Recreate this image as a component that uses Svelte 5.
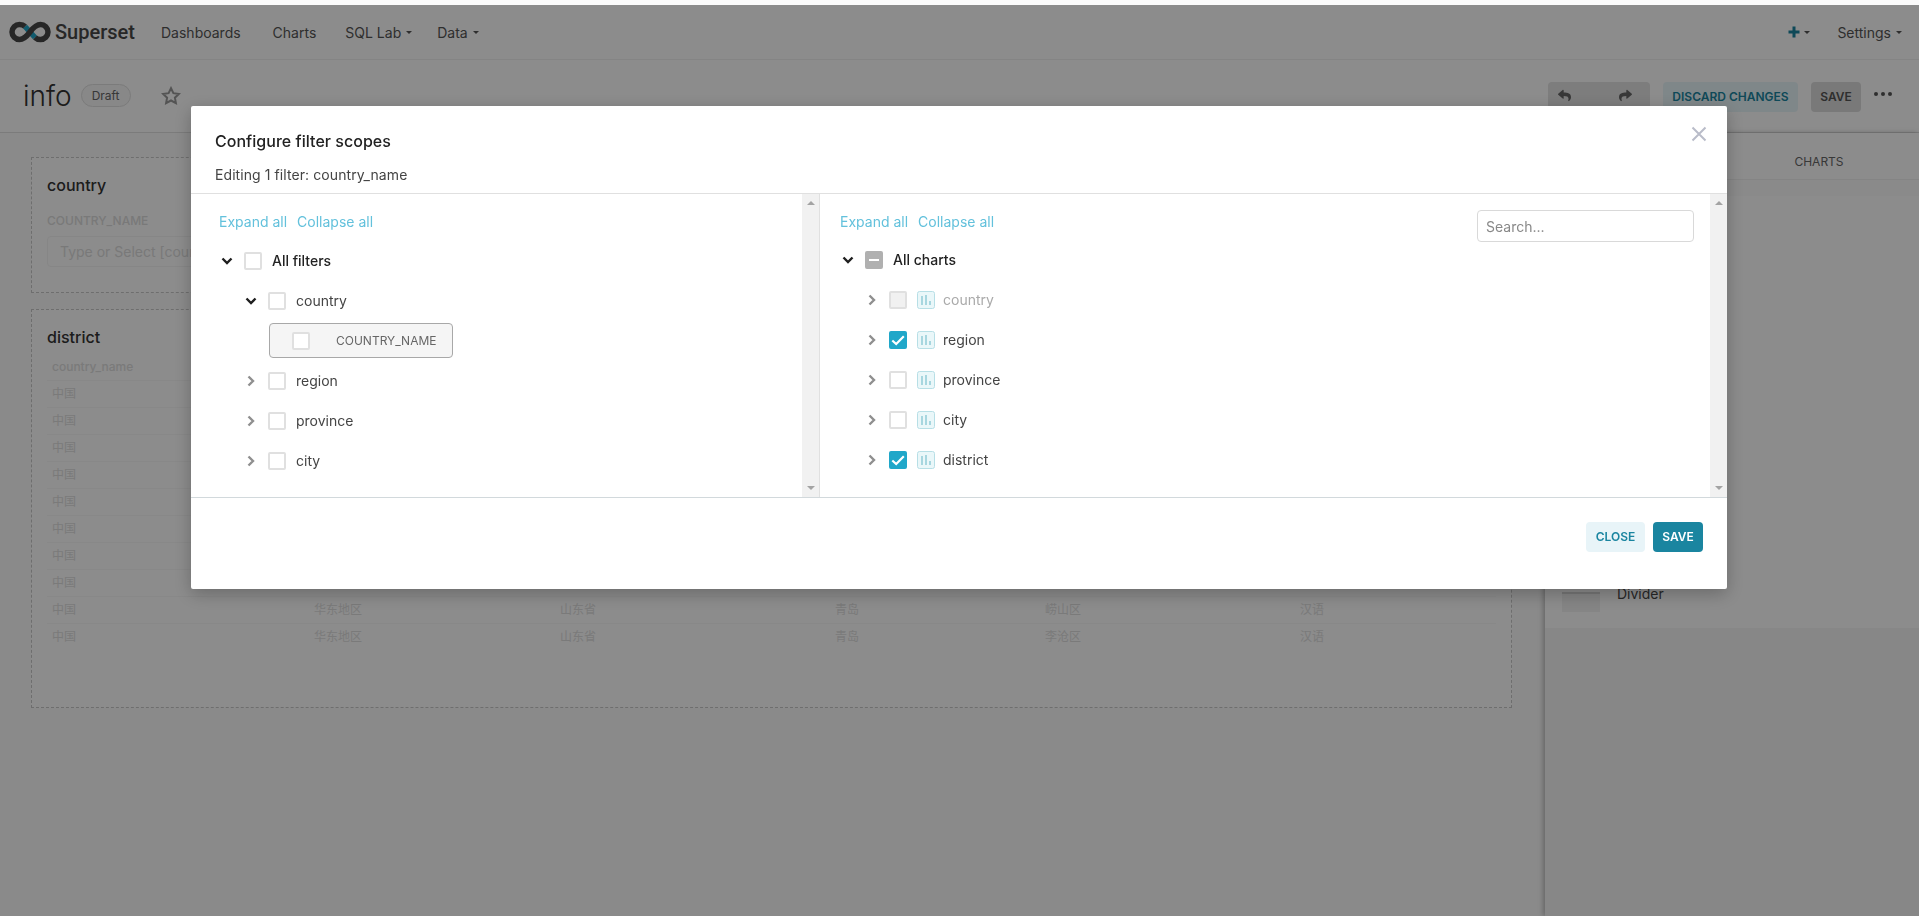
<script>
  const rows = ['市南区', '市北区', '黄岛区', '城阳区', '即墨区', '胶州市', '平度市', '莱西市', '崂山区', '李沧区']
  const columns = ['country_name', 'region_name', 'province_name', 'city_name', 'district_name', 'language']
  const elements = ['Header', 'Text', 'Row', 'Column', 'Tabs', 'Divider']

  const filterRows = ['region', 'province', 'city']
  const chartRows = [
    { name: 'country', state: 'disabled' },
    { name: 'region', state: 'checked' },
    { name: 'province', state: '' },
    { name: 'city', state: '' },
    { name: 'district', state: 'checked' }
  ]
</script>

{#snippet chevron(open)}
  <span class="chev">
    {#if open}
      <svg width="12" height="8" viewBox="0 0 12 8"><path d="M1.500 1.500 6 6l4.500-4.500" class="chev-open" /></svg>
    {:else}
      <svg width="8" height="12" viewBox="0 0 8 12"><path d="M1.500 1.500 6 6l-4.500 4.500" class="chev-closed" /></svg>
    {/if}
  </span>
{/snippet}

{#snippet checkbox(state)}
  <span class="cb {state}">
    {#if state === 'checked'}
      <svg width="14" height="14" viewBox="0 0 14 14"><path d="M1.300 7.500 5.200 11 12.800 3.300" class="tick" /></svg>
    {:else if state === 'half'}
      <span class="dash"></span>
    {/if}
  </span>
{/snippet}

<div class="page">
  <nav class="nav">
    <div class="brand">
      <svg width="42" height="22" viewBox="0 0 42 22" class="logo">
        <path d="M16 5.500 26 16.500" class="logo-teal" />
        <path d="M16 5.500C14.500 4 12.500 3.500 10.500 3.500a7.500 7.500 0 0 0 0 15C15 18.500 18 15 21 11c3-4 6-7.500 10.500-7.500a7.500 7.500 0 0 1 0 15c-2 0-4-.5-5.500-2" class="logo-dark" />
      </svg>
      <span class="brand-name">Superset</span>
    </div>
    <a class="nav-link dash-link">Dashboards</a>
    <a class="nav-link charts-link">Charts</a>
    <a class="nav-link sql-link">SQL Lab<i class="caret"></i></a>
    <a class="nav-link">Data<i class="caret"></i></a>
    <div class="nav-right">
      <span class="plus"><svg width="12" height="12" viewBox="0 0 12 12"><path d="M6 .5v11M.5 6h11" /></svg><i class="caret"></i></span>
      <a class="nav-link">Settings<i class="caret"></i></a>
    </div>
  </nav>

  <header class="head">
    <h1>info</h1>
    <span class="pill">Draft</span>
    <svg class="star" width="20" height="20" viewBox="0 0 20 20"><path d="M10 2.200l2.400 5 5.500.7-4 3.800 1 5.400-4.900-2.600-4.900 2.600 1-5.400-4-3.800 5.500-.7z" /></svg>
    <div class="head-actions">
      <div class="undo">
        <svg width="13" height="13" viewBox="0 0 512 512"><path d="M8.309 189.836L184.313 37.851C199.719 24.546 224 35.347 224 56.015v80.053c160.629 1.839 288 34.032 288 186.258 0 61.441-39.581 122.309-83.333 154.132-13.653 9.931-33.111-2.533-28.077-18.631 45.344-145.012-21.507-183.51-176.59-185.742V360c0 20.7-24.3 31.453-39.687 18.164l-176.004-152c-11.071-9.562-11.086-26.753 0-36.328z" /></svg>
        <svg width="13" height="13" viewBox="0 0 512 512" class="flip"><path d="M8.309 189.836L184.313 37.851C199.719 24.546 224 35.347 224 56.015v80.053c160.629 1.839 288 34.032 288 186.258 0 61.441-39.581 122.309-83.333 154.132-13.653 9.931-33.111-2.533-28.077-18.631 45.344-145.012-21.507-183.51-176.59-185.742V360c0 20.7-24.3 31.453-39.687 18.164l-176.004-152c-11.071-9.562-11.086-26.753 0-36.328z" /></svg>
      </div>
      <button class="btn discard">DISCARD CHANGES</button>
      <button class="btn save-head">SAVE</button>
      <span class="dots"><i></i><i></i><i></i></span>
    </div>
  </header>

  <div class="content">
    <main class="grid">
      <section class="card filter-card">
        <h2>country</h2>
        <div class="label">COUNTRY_NAME</div>
        <div class="fake-input">Type or Select [country_name]</div>
      </section>
      <section class="card table-card">
        <h2>district</h2>
        <div class="tr th">
          {#each columns as c}<span>{c}</span>{/each}
        </div>
        {#each rows as d}
          <div class="tr">
            <span>中国</span><span>华东地区</span><span>山东省</span><span>青岛</span><span>{d}</span><span>汉语</span>
          </div>
        {/each}
      </section>
    </main>
    <aside class="side">
      <div class="tabs"><span>LAYOUT ELEMENTS</span><span>CHARTS</span></div>
      <div class="tab-strip"></div>
      <div class="elements">
        {#each elements as el}
          <div class="element"><span class="thumb"></span><span class="el-name">{el}</span></div>
        {/each}
      </div>
    </aside>
  </div>
</div>

<div class="backdrop"></div>

<div class="modal-layer">
  <div class="modal">
    <button class="close" aria-label="Close">
      <svg width="16" height="16" viewBox="0 0 16 16"><path d="M1.500 1.500l13 13M14.500 1.500l-13 13" /></svg>
    </button>
    <div class="modal-head">
      <div class="modal-title">Configure filter scopes</div>
      <div class="modal-sub">Editing 1 filter: country_name</div>
    </div>
    <div class="modal-body">
      <div class="pane left">
        <div class="tree">
          <div class="toolbar"><a>Expand all</a><a>Collapse all</a></div>
          <div class="list">
            <div class="row">{@render chevron(true)}{@render checkbox('')}<span class="txt strong">All filters</span></div>
            <div class="row lvl2">{@render chevron(true)}{@render checkbox('')}<span class="txt">country</span></div>
            <div class="leaf">{@render checkbox('')}<span class="leaf-name">COUNTRY_NAME</span></div>
            {#each filterRows as f}
              <div class="row lvl2">{@render chevron(false)}{@render checkbox('')}<span class="txt">{f}</span></div>
            {/each}
          </div>
        </div>
        <div class="scrollbar"><i class="up"></i><i class="down"></i></div>
      </div>
      <div class="pane right">
        <div class="tree">
          <div class="toolbar">
            <a>Expand all</a><a>Collapse all</a>
            <input class="search" placeholder="Search..." />
          </div>
          <div class="list charts">
            <div class="row">{@render chevron(true)}{@render checkbox('half')}<span class="txt strong">All charts</span></div>
            {#each chartRows as c}
              <div class="row lvl2" class:off={c.state === 'disabled'}>
                {@render chevron(false)}{@render checkbox(c.state)}
                <svg class="chart-ico" width="18" height="18" viewBox="0 0 18 18">
                  <rect x=".5" y=".5" width="17" height="17" rx="2" class="ico-box" />
                  <path d="M4 5h2v9H4zM8 4h2v10H8zM12 10h2v4h-2z" class="ico-bars" />
                </svg>
                <span class="txt ico-txt">{c.name}</span>
              </div>
            {/each}
          </div>
        </div>
        <div class="scrollbar"><i class="up"></i><i class="down"></i></div>
      </div>
    </div>
    <div class="modal-foot">
      <button class="btn close-btn">CLOSE</button>
      <button class="btn save-btn">SAVE</button>
    </div>
  </div>
</div>

<style>
  :global(body) {
    margin: 0;
    overflow: hidden;
    background: #fff;
  }
  .page {
    height: 911px;
    padding-top: 5px;
    overflow: hidden;
    display: flex;
    flex-direction: column;
    font-family: Inter, "Noto Sans CJK SC", sans-serif;
    font-size: 14px;
    color: #555;
    background: #fbfbfb;
  }
  a { cursor: pointer; }

  .nav {
    height: 55px;
    flex: none;
    box-sizing: border-box;
    border-bottom: 1px solid #f0f0f0;
    background: #fff;
    display: flex;
    align-items: center;
  }
  .brand {
    width: 161px;
    display: flex;
    align-items: center;
    padding-left: 9px;
    box-sizing: border-box;
  }
  .logo { fill: none; stroke-width: 5.5; }
  .logo-teal { stroke: #20a7c9; }
  .logo-dark { stroke: #484848; }
  .brand-name {
    margin-left: 4px;
    font-family: Roboto, sans-serif;
    font-size: 20px;
    font-weight: 500;
    color: #484848;
  }
  .nav-link { color: #555; display: inline-flex; align-items: center; }
  .dash-link { margin-right: 32px; }
  .charts-link { margin-right: 29px; }
  .sql-link { margin-right: 25px; }
  .caret {
    display: inline-block;
    margin-left: 5px;
    border-left: 3px solid transparent;
    border-right: 3px solid transparent;
    border-top: 3.500px solid #555;
  }
  .nav-right {
    margin-left: auto;
    padding-right: 17px;
    display: flex;
    align-items: center;
    gap: 27px;
  }
  .plus { display: inline-flex; align-items: center; }
  .plus svg { stroke: #1a85a0; stroke-width: 3; }
  .plus .caret { margin-left: 4px; }

  .head {
    height: 73px;
    flex: none;
    box-sizing: border-box;
    border-bottom: 1px solid #e0e0e0;
    background: #fff;
    display: flex;
    align-items: center;
    padding: 0 0 1px 23px;
    position: relative;
  }
  h1 {
    margin: 0 9px 0 0;
    font-size: 28px;
    font-weight: 300;
    color: #333;
    line-height: 1;
  }
  .pill {
    width: 50px;
    height: 23px;
    box-sizing: border-box;
    border: 1px solid #e0e0e0;
    border-radius: 12px;
    background: #f7f7f7;
    font-size: 12px;
    line-height: 21px;
    text-align: center;
    color: #666;
  }
  .star {
    margin-left: 30px;
    fill: none;
    stroke: #9a9a9a;
    stroke-width: 2;
  }
  .head-actions {
    position: absolute;
    top: 22px;
    left: 1548px;
    display: flex;
    align-items: flex-start;
  }
  .undo {
    width: 102px;
    height: 35px;
    box-sizing: border-box;
    padding: 7px 18px 0 10px;
    border-radius: 4px;
    background: #e3e3e3;
    display: flex;
    justify-content: space-between;
    fill: #666;
  }
  .flip { transform: scaleX(-1); }
  .btn {
    border: 0;
    border-radius: 4px;
    height: 30px;
    font-family: Inter, sans-serif;
    font-size: 12px;
    font-weight: 600;
    padding: 0 0 1px;
  }
  .discard {
    width: 135px;
    margin-left: 13px;
    background: #e8f6fa;
    color: #1a85a0;
  }
  .save-head {
    width: 50px;
    margin-left: 13px;
    background: #dcdcdc;
    color: #555;
  }
  .dots {
    display: flex;
    gap: 3px;
    margin: 10px 0 0 13px;
  }
  .dots i {
    width: 4px;
    height: 4px;
    border-radius: 50%;
    background: #555;
  }

  .content { flex: 1; display: flex; min-height: 0; }
  .grid {
    width: 1545px;
    flex: none;
    box-sizing: border-box;
    padding: 24px 33px 0 31px;
    display: flex;
    flex-direction: column;
    gap: 16px;
    background: #fbfbfb;
  }
  .card {
    border: 1px dashed #c8c8c8;
    box-sizing: border-box;
    padding: 0 15px;
    background: #fff;
  }
  h2 {
    margin: 0;
    font-size: 16px;
    font-weight: 500;
    color: #333;
    line-height: 20px;
  }
  .filter-card { height: 136px; padding-top: 17px; }
  .label {
    margin-top: 18px;
    font-size: 12px;
    font-weight: 500;
    color: #dcdcdc;
    line-height: 16px;
  }
  .fake-input {
    margin-top: 7px;
    height: 31px;
    box-sizing: border-box;
    border: 1px solid #f4f4f4;
    border-radius: 4px;
    padding-left: 12px;
    line-height: 29px;
    color: #dcdcdc;
  }
  .table-card { height: 399px; padding-top: 17px; }
  .tr {
    display: grid;
    grid-template-columns: 262px 246px 275px 210px 255px 1fr;
    height: 27px;
    box-sizing: border-box;
    border-bottom: 1px solid #f8f8f8;
    font-size: 12px;
    line-height: 26px;
    color: #dedede;
  }
  .tr:last-child { border-bottom: 0; }
  .tr span { padding-left: 5px; }
  .th { margin-top: 7px; font-weight: 500; }

  .side {
    flex: 1;
    background: #f6f6f6;
    box-shadow: -2px 0 5px rgba(0, 0, 0, 0.25);
    position: relative;
  }
  .tabs {
    height: 47px;
    box-sizing: border-box;
    border-bottom: 1px solid #f0f0f0;
    background: #fff;
    display: grid;
    grid-template-columns: 174px 1fr;
    align-items: center;
    padding-top: 10px;
    text-align: center;
    font-size: 12px;
    color: #666;
  }
  .tab-strip { height: 16px; background: #fbfbfb; }
  .elements {
    height: 432px;
    background: #fff;
    display: flex;
    flex-direction: column;
    justify-content: flex-end;
  }
  .element {
    height: 44px;
    display: flex;
    padding-left: 17px;
    gap: 17px;
    flex: none;
  }
  .thumb {
    width: 38px;
    height: 20px;
    margin-top: 8px;
    background: #f2f2f2;
    border-top: 2px solid #d8d8d8;
    box-sizing: border-box;
  }
  .el-name { line-height: 20px; color: #484848; }

  .backdrop {
    position: fixed;
    inset: 5px 0 0 0;
    background: rgba(0, 0, 0, 0.45);
  }
  .modal-layer {
    position: fixed;
    inset: 0;
    box-sizing: border-box;
    padding: 106px 192px 0 191px;
    font-family: Inter, sans-serif;
    font-size: 14px;
    color: #484848;
  }
  .modal {
    position: relative;
    height: 483px;
    display: flex;
    flex-direction: column;
    background: #fff;
    border-radius: 2px;
    box-shadow: 0 5px 18px rgba(0, 0, 0, 0.25);
  }
  .close {
    position: absolute;
    top: 20px;
    right: 20px;
    padding: 0;
    border: 0;
    background: none;
    line-height: 0;
  }
  .close svg { stroke: #b9bcc9; stroke-width: 2; }
  .modal-head {
    height: 88px;
    flex: none;
    box-sizing: border-box;
    border-bottom: 1px solid #e0e0e0;
    padding: 25px 0 0 24px;
  }
  .modal-title {
    font-size: 16px;
    font-weight: 500;
    line-height: 20px;
    color: #222;
    letter-spacing: 0.03px;
  }
  .modal-sub {
    margin-top: 14px;
    line-height: 20px;
    color: #444;
    letter-spacing: 0.08px;
  }
  .modal-body { height: 303px; flex: none; display: flex; }
  .pane { display: flex; }
  .pane.left { width: 629px; border-right: 1px solid #e0e0e0; box-sizing: border-box; }
  .pane.right { flex: 1; }
  .tree { flex: 1; min-width: 0; padding-top: 16px; }
  .left .tree { padding-left: 28px; }
  .right .tree { padding-left: 20px; padding-right: 16px; }
  .toolbar {
    height: 32px;
    display: flex;
    align-items: flex-start;
    gap: 10px;
  }
  .toolbar a { color: #63c1dc; line-height: 20px; margin-top: 2px; }
  .search {
    margin-left: auto;
    width: 217px;
    height: 32px;
    box-sizing: border-box;
    border: 1px solid #d9d9d9;
    border-radius: 4px;
    padding: 0 8px;
    font-family: Inter, sans-serif;
    font-size: 14px;
    color: #484848;
    outline: none;
  }
  .search::placeholder { color: #888; }
  .list { margin-top: 10px; }
  .list.charts { margin-top: 9px; }
  .row {
    height: 18px;
    margin-bottom: 22px;
    display: flex;
    align-items: center;
  }
  .lvl2 { padding-left: 24px; }
  .chev {
    width: 16px;
    margin-right: 9px;
    flex: none;
    display: flex;
    justify-content: center;
    align-items: center;
  }
  .chev-open { fill: none; stroke: #1f1f1f; stroke-width: 2.4; }
  .chev-closed { fill: none; stroke: #8f8f8f; stroke-width: 2.4; }
  .cb {
    width: 18px;
    height: 18px;
    flex: none;
    box-sizing: border-box;
    border: 2px solid #e0e0e0;
    border-radius: 2px;
    background: #fff;
    display: flex;
    align-items: center;
    justify-content: center;
  }
  .cb.checked { background: #20a7c9; border-color: #20a7c9; }
  .cb.half { background: #b0b0b0; border-color: #b0b0b0; }
  .cb.disabled { background: #f1f1f1; }
  .tick { fill: none; stroke: #fff; stroke-width: 2.2; }
  .dash { width: 10px; height: 2px; background: #fff; }
  .txt { margin-left: 10px; line-height: 18px; color: #444; }
  .strong { font-weight: 500; color: #222; }
  .ico-txt { margin-left: 8px; }
  .off .txt { color: #aaa; }
  .chart-ico { margin-left: 10px; flex: none; }
  .ico-box { fill: #eaf7f9; stroke: #b7dfe6; }
  .ico-bars { fill: #a7d6df; }
  .leaf {
    width: 184px;
    height: 35px;
    margin: -9px 0 14px 50px;
    box-sizing: border-box;
    border: 1px solid #a8a8a8;
    border-radius: 4px;
    background: #f5f5f5;
    padding-left: 22px;
    display: flex;
    align-items: center;
  }
  .leaf-name { margin-left: 26px; font-size: 12px; color: #666; }
  .scrollbar {
    width: 17px;
    flex: none;
    background: #f1f1f1;
    display: flex;
    flex-direction: column;
    justify-content: space-between;
    align-items: center;
    padding: 7px 0;
    box-sizing: border-box;
  }
  .scrollbar i {
    border-left: 4px solid transparent;
    border-right: 4px solid transparent;
  }
  .up { border-bottom: 4px solid #a3a3a3; }
  .down { border-top: 4px solid #a3a3a3; }
  .modal-foot {
    flex: 1;
    border-top: 1px solid #d2d9dc;
    padding: 24px 24px 0 0;
    display: flex;
    justify-content: flex-end;
    gap: 8px;
  }
  .close-btn { width: 59px; background: #e8f4f8; color: #1a85a0; }
  .save-btn { width: 50px; background: #1a85a0; color: #fff; }
</style>
